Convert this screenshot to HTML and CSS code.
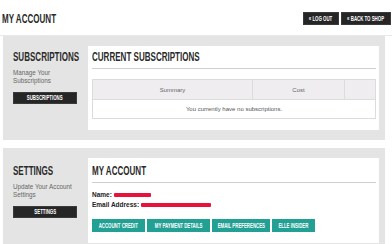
FILE: index.html
```html
<!DOCTYPE html>
<html lang="en">
<head>
<meta charset="utf-8">
<title>My Account</title>
<link rel="stylesheet" href="styles.css">
</head>
<body>
<header class="top">
  <h1 class="page-title"><span class="cond">MY ACCOUNT</span></h1>
  <div class="top-actions">
    <a class="btn-dark btn-top btn-logout"><span class="cond">« LOG OUT</span></a>
    <a class="btn-dark btn-top btn-shop"><span class="cond">« BACK TO SHOP</span></a>
  </div>
</header>

<section class="panel panel-subs">
  <aside class="side">
    <h2 class="title"><span class="cond">SUBSCRIPTIONS</span></h2>
    <p class="side-text">Manage Your<br>Subscriptions</p>
    <a class="btn-dark btn-side"><span class="cond">SUBSCRIPTIONS</span></a>
  </aside>
  <div class="card">
    <h3 class="title card-title"><span class="cond">CURRENT SUBSCRIPTIONS</span></h3>
    <table class="subs-table">
      <colgroup><col class="c1"><col class="c2"><col class="c3"></colgroup>
      <thead>
        <tr><th>Summary</th><th>Cost</th><th></th></tr>
      </thead>
      <tbody>
        <tr><td colspan="3">You currently have no subscriptions.</td></tr>
      </tbody>
    </table>
  </div>
</section>

<section class="panel panel-settings">
  <aside class="side">
    <h2 class="title"><span class="cond">SETTINGS</span></h2>
    <p class="side-text">Update Your Account<br>Settings</p>
    <a class="btn-dark btn-side"><span class="cond">SETTINGS</span></a>
  </aside>
  <div class="card">
    <h3 class="title card-title"><span class="cond">MY ACCOUNT</span></h3>
    <div class="details">
      <p class="detail">Name: <span class="redact redact-name"></span></p>
      <p class="detail">Email Address: <span class="redact redact-email"></span></p>
    </div>
    <div class="actions">
      <a class="btn-teal w-credit"><span class="cond">ACCOUNT CREDIT</span></a>
      <a class="btn-teal w-payment"><span class="cond">MY PAYMENT DETAILS</span></a>
      <a class="btn-teal w-email"><span class="cond">EMAIL PREFERENCES</span></a>
      <a class="btn-teal w-elle"><span class="cond">ELLE INSIDER</span></a>
    </div>
  </div>
</section>
</body>
</html>
```

FILE: styles.css
```css
* { box-sizing: border-box; }

html, body {
  margin: 0;
  padding: 0;
  background: #ffffff;
  width: 392px;
  height: 244px;
  overflow: hidden;
  font-family: "Liberation Sans", Arial, sans-serif;
  color: #333;
}

.cond {
  display: inline-block;
  font-family: "Liberation Sans", Arial, sans-serif;
  font-weight: bold;
  transform: scaleX(0.67);
  transform-origin: left center;
  white-space: nowrap;
}

/* header */
.top {
  display: flex;
  justify-content: space-between;
  align-items: flex-start;
  height: 36px;
  padding: 0 1px 0 2px;
  border-bottom: 1px solid #e9e9e9;
}

.page-title {
  margin: 13px 0 0;
  font-size: 12px;
  line-height: 13px;
  color: #2a2a2a;
  font-weight: bold;
}

.top-actions {
  display: flex;
  gap: 2px;
  margin-top: 12px;
}

.btn-dark {
  display: flex;
  align-items: center;
  justify-content: center;
  background: #262626;
  color: #fff;
  text-decoration: none;
  border: 1px solid #3a3a3a;
}

.btn-dark .cond,
.btn-teal .cond {
  transform-origin: center center;
  font-size: 6.5px;
  line-height: 8px;
}

.btn-top { height: 13px; }
.btn-logout { width: 36px; }
.btn-shop { width: 50px; }

/* panels */
.panel {
  display: flex;
  margin: 0 7px 0 3px;
  padding: 10px 6px 10px 10px;
  background: #e4e4e4;
}

.panel-settings { margin-top: 8px; }

.side {
  width: 75px;
  flex: none;
  padding-top: 5px;
}

.panel-settings .side { padding-top: 7px; }

.title {
  margin: 0;
  font-size: 12px;
  line-height: 13px;
  color: #2a2a2a;
  font-weight: bold;
}

.side-text {
  margin: 5px 0 0;
  font-size: 6.3px;
  line-height: 8px;
  color: #666;
}

.btn-side {
  width: 64px;
  height: 12px;
  margin-top: 7px;
}

/* card */
.card {
  flex: 1;
  background: #fff;
  padding: 0 3px 11px 4px;
}

.card-title {
  padding: 5px 0 4px;
  border-bottom: 1px solid #cfcfcf;
}

.panel-settings .card-title { padding-top: 7px; }

/* table */
.subs-table {
  width: 100%;
  margin-top: 10px;
  border-collapse: collapse;
  table-layout: fixed;
  font-size: 6px;
  color: #666;
}

.c1 { width: 160px; }
.c2 { width: 92px; }
.c3 { width: auto; }

.subs-table th {
  height: 20px;
  font-weight: normal;
  background: #efedef;
  border: 1px solid #dcdcdc;
  text-align: center;
  padding: 0;
}

.subs-table td {
  height: 19px;
  border: 1px solid #dcdcdc;
  text-align: center;
  padding: 0;
  color: #555;
}

/* details */
.details { margin-top: 7px; }

.detail {
  margin: 0;
  display: flex;
  align-items: center;
  gap: 2px;
  font-size: 6.5px;
  line-height: 10px;
  font-weight: bold;
  color: #222;
}

.redact {
  display: inline-block;
  height: 4px;
  background: #e8113b;
  border-radius: 1px;
}

.redact-name { width: 37px; }
.redact-email { width: 70px; }

/* teal buttons */
.actions {
  display: flex;
  gap: 2px;
  margin-top: 9px;
}

.btn-teal {
  display: flex;
  align-items: center;
  justify-content: center;
  height: 13px;
  background: #22a094;
  color: #fff;
  text-decoration: none;
}

.w-credit { width: 53px; }
.w-payment { width: 63px; }
.w-email { width: 58px; }
.w-elle { width: 43px; }
```
